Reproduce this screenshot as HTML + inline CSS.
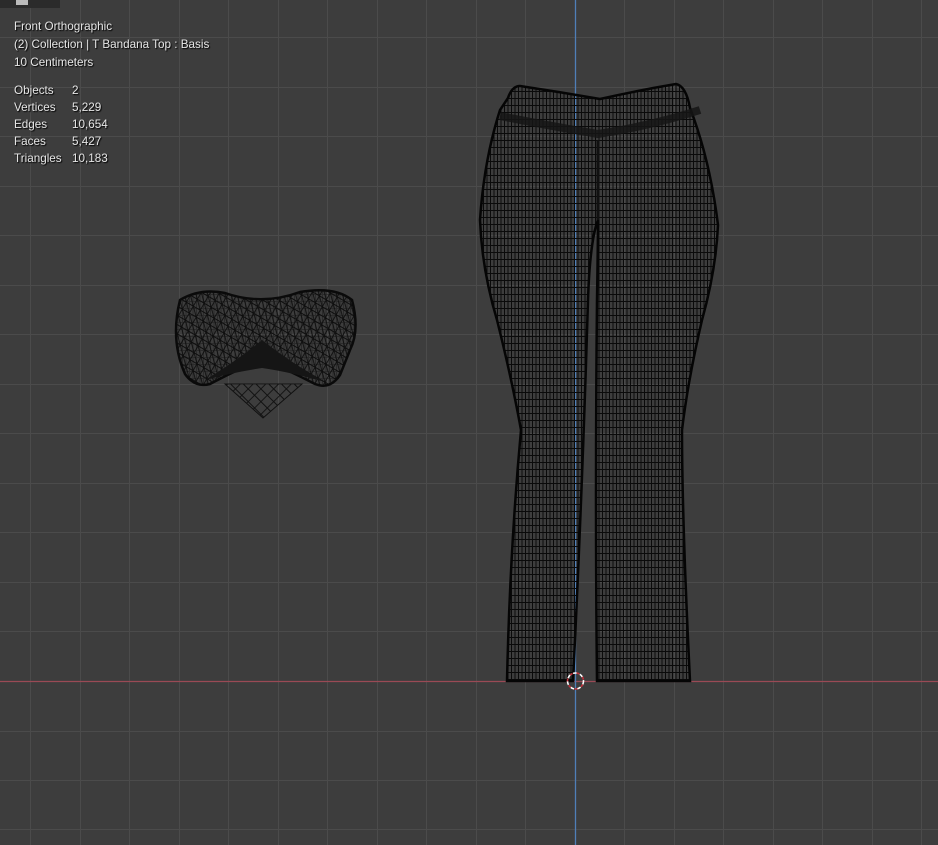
<!DOCTYPE html>
<html><head><meta charset="utf-8"><style>
html,body{margin:0;padding:0;background:#3d3d3d;width:938px;height:845px;overflow:hidden}
.t{position:absolute;font-family:"Liberation Sans","DejaVu Sans",sans-serif;font-size:11.7px;color:#e6e6e6;text-shadow:1px 1px 1px #000}
</style></head><body>
<svg width="938" height="845" style="position:absolute;left:0;top:0">
<defs>
<pattern id="pg" width="3.5" height="7" patternUnits="userSpaceOnUse">
<path d="M0.5 0V7M0 0.5H3.5" stroke="#0a0a0a" stroke-width="1" fill="none"/>
</pattern>
<pattern id="tg" width="9" height="9" patternUnits="userSpaceOnUse" patternTransform="rotate(45)">
<path d="M0.5 0V9M0 0.5H9" stroke="#111" stroke-width="0.9" fill="none"/>
</pattern>
<pattern id="tg2" width="8" height="8" patternUnits="userSpaceOnUse" patternTransform="rotate(30)">
<path d="M0.5 0V8M0 0.5H8M0 0L8 8" stroke="#0e0e0e" stroke-width="0.9" fill="none"/>
</pattern>
</defs>
<g stroke="#4b4b4b" stroke-width="1">
<path d="M30.5 0V845M80.5 0V845M129.5 0V845M179.5 0V845M228.5 0V845M278.5 0V845M327.5 0V845M377.5 0V845M426.5 0V845M476.5 0V845M525.5 0V845M624.5 0V845M674.5 0V845M723.5 0V845M773.5 0V845M822.5 0V845M872.5 0V845M921.5 0V845"/>
<path d="M0 37.5H938M0 87.5H938M0 136.5H938M0 186.5H938M0 235.5H938M0 285.5H938M0 334.5H938M0 384.5H938M0 433.5H938M0 483.5H938M0 532.5H938M0 582.5H938M0 631.5H938M0 731.5H938M0 780.5H938M0 829.5H938"/>
</g>
<path d="M0 681.5H938" stroke="#9a4a55" stroke-width="1.2"/>
<path d="M575.5 0V845" stroke="#4f7fb8" stroke-width="1.3"/>
<!-- pants -->
<path d="M508 98 Q512 86 520 86 Q560 92 600 99 Q640 90 676 84 Q686 86 690 108 Q710 160 718 225 Q716 270 702 320 Q688 380 682 430 Q682 520 690 681 L597 681 Q595 500 597 300 Q598 240 598 220 Q590 240 588 300 Q582 500 573 681 L507 681 Q510 550 521 430 Q512 380 497 320 Q482 270 480 220 Q484 160 500 110 Z" fill="url(#pg)" stroke="#050505" stroke-width="2.5"/>
<path d="M500 116 Q550 126 598 134 Q650 126 700 110" stroke="#151515" stroke-width="8" fill="none" opacity="0.85"/>
<path d="M598 140V220" stroke="#111" stroke-width="3"/>
<!-- top -->
<path d="M225 384 L263 418 L302 384 Z" fill="url(#tg)" stroke="#111" stroke-width="1"/>
<path d="M180 300 Q200 288 225 293 Q262 306 300 292 Q335 286 352 300 Q360 330 350 350 L340 375 Q330 390 315 384 Q280 366 262 360 Q240 368 210 384 Q195 388 185 374 Q170 340 180 300 Z" fill="url(#tg2)" stroke="#0a0a0a" stroke-width="2.5"/>
<path d="M180 300 Q200 288 225 293 Q262 306 300 292 Q335 286 352 300 Q360 330 350 350 L340 375 Q330 390 315 384 Q280 366 262 360 Q240 368 210 384 Q195 388 185 374 Q170 340 180 300 Z" fill="url(#pg)" opacity="0.35"/>
<path d="M205 380 Q235 362 262 340 Q290 362 325 382 Q290 372 262 368 Q235 372 205 380 Z" fill="#151515"/>
<circle cx="575.5" cy="681" r="8" fill="none" stroke="#fff" stroke-width="1.6" stroke-dasharray="4 3"/>
<circle cx="575.5" cy="681" r="8" fill="none" stroke="#c0303a" stroke-width="1.6" stroke-dasharray="3 4" stroke-dashoffset="3.5"/>
<rect x="0" y="0" width="60" height="8" fill="#2b2b2b"/>
<rect x="16" y="0" width="12" height="5" fill="#bbb"/>
</svg>
<div class="t" style="left:14px;top:20px">Front Orthographic</div>
<div class="t" style="left:14px;top:38px">(2) Collection | T Bandana Top : Basis</div>
<div class="t" style="left:14px;top:56px">10 Centimeters</div>
<div class="t" style="left:14px;top:84px">Objects</div><div class="t" style="left:72px;top:84px">2</div>
<div class="t" style="left:14px;top:101px">Vertices</div><div class="t" style="left:72px;top:101px">5,229</div>
<div class="t" style="left:14px;top:118px">Edges</div><div class="t" style="left:72px;top:118px">10,654</div>
<div class="t" style="left:14px;top:135px">Faces</div><div class="t" style="left:72px;top:135px">5,427</div>
<div class="t" style="left:14px;top:152px">Triangles</div><div class="t" style="left:72px;top:152px">10,183</div>
</body></html>
